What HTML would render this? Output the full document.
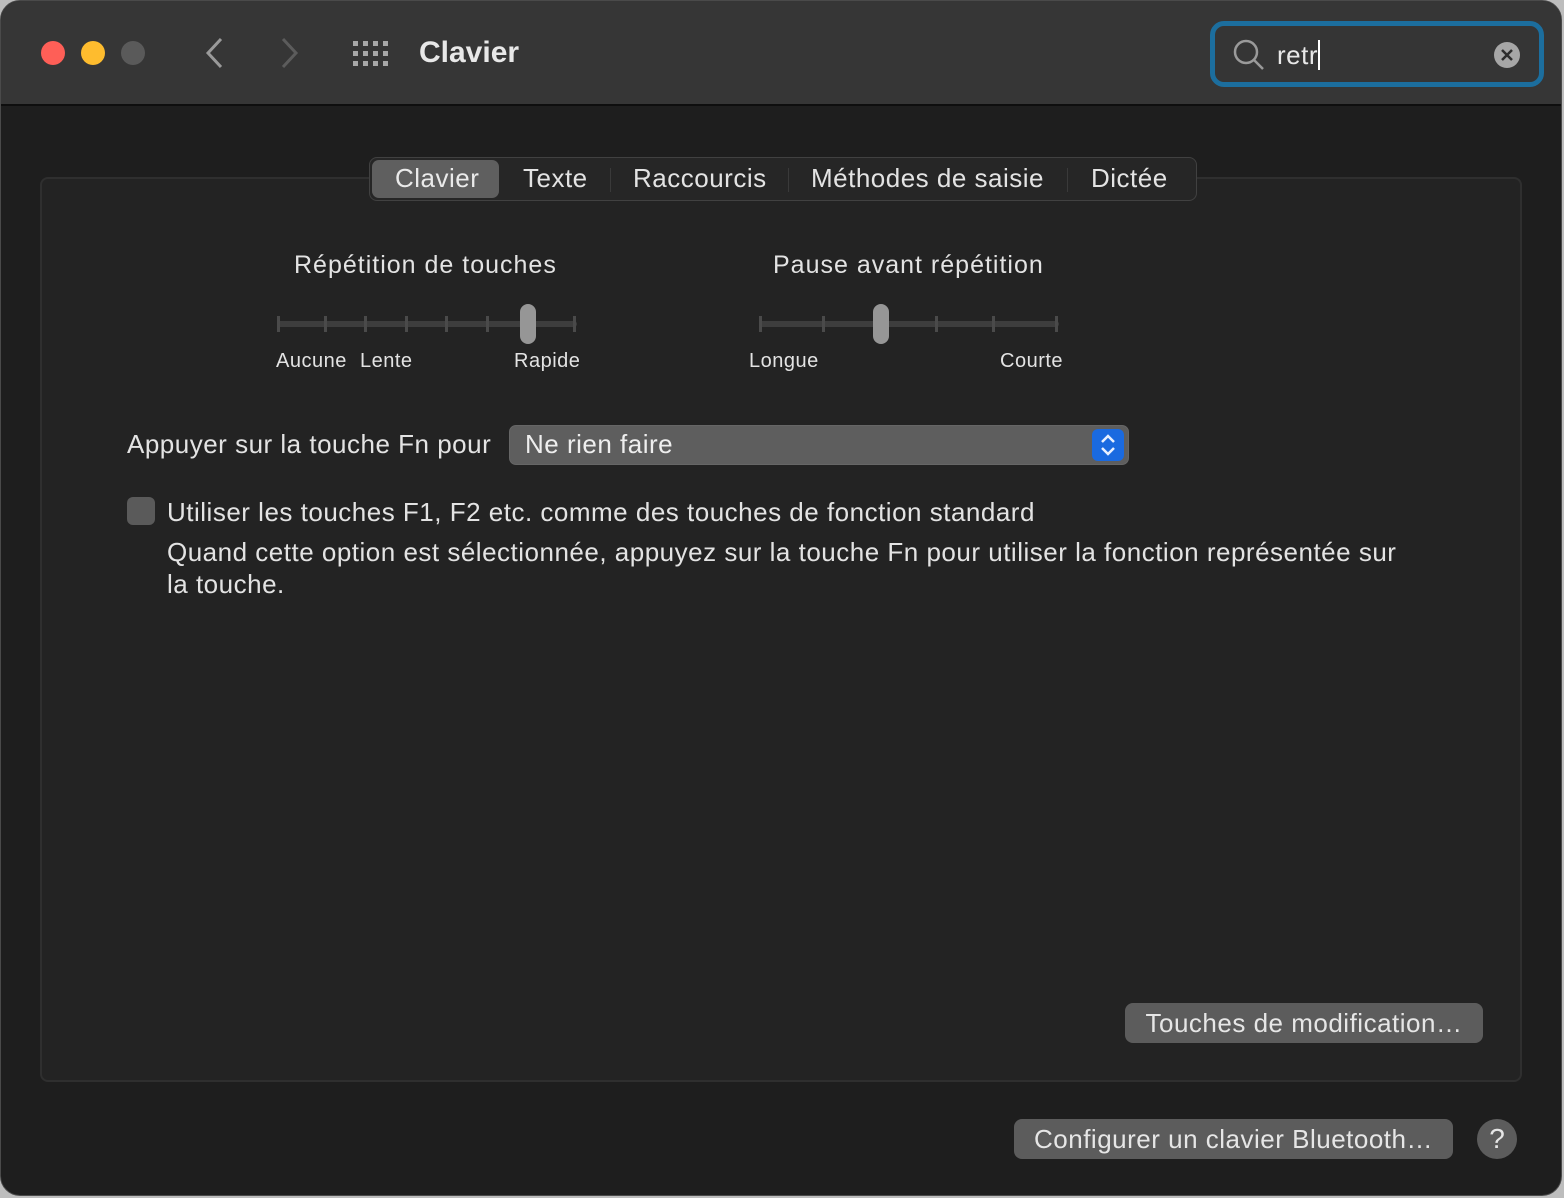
<!DOCTYPE html>
<html><head><meta charset="utf-8"><style>
*{margin:0;padding:0;box-sizing:border-box}
body{width:1564px;height:1198px;background:#bdbdbd;font-family:"Liberation Sans",sans-serif;color:#e3e3e3;overflow:hidden;position:relative;letter-spacing:0.5px}
.win{position:absolute;left:0;top:0;width:1562px;height:1196px;background:#1e1e1e;border-radius:20px;overflow:hidden;border:1px solid #4a4a4a}
.tb{position:absolute;left:0;top:0;width:100%;height:105px;background:#363636;border-bottom:2px solid #0e0e0e}
.dot{position:absolute;top:40px;width:24px;height:24px;border-radius:50%}
.abs{position:absolute;white-space:nowrap}
.panel{position:absolute;left:39px;top:176px;width:1482px;height:905px;border:2px solid #2f2f2f;border-radius:8px;background:#232323}
.tabs{position:absolute;left:368px;top:156px;width:828px;height:44px;border:1px solid #414141;border-radius:8px;background:#262626;font-size:26px}
.btn{position:absolute;background:#5c5c5c;border-radius:8px;font-size:26px;color:#e6e6e6;text-align:center}
.sl{position:absolute;height:6px;background:#3d3d3d;border-radius:3px}
.tick{position:absolute;width:3px;height:16px;background:#4a4a4a;top:-5px}
.knob{position:absolute;width:16px;height:40px;background:#969696;border-radius:8px;top:-17px}
</style></head><body>
<div class="win">
<div class="tb">
 <div class="dot" style="left:40px;background:#fe5f57"></div>
 <div class="dot" style="left:80px;background:#febc2e"></div>
 <div class="dot" style="left:120px;background:#5a5a5a"></div>
 <svg class="abs" style="left:200px;top:34px" width="110" height="36"><path d="M20 4 L7 18 L20 32" stroke="#9a9a9a" stroke-width="3" fill="none"/><path d="M82 4 L95 18 L82 32" stroke="#5c5c5c" stroke-width="3" fill="none"/></svg>
 <svg class="abs" style="left:352px;top:40px" width="36" height="28" fill="#a8a8a8">
  <rect x="0" y="0" width="5" height="5"/><rect x="10" y="0" width="5" height="5"/><rect x="20" y="0" width="5" height="5"/><rect x="30" y="0" width="5" height="5"/>
  <rect x="0" y="10" width="5" height="5"/><rect x="10" y="10" width="5" height="5"/><rect x="20" y="10" width="5" height="5"/><rect x="30" y="10" width="5" height="5"/>
  <rect x="0" y="20" width="5" height="5"/><rect x="10" y="20" width="5" height="5"/><rect x="20" y="20" width="5" height="5"/><rect x="30" y="20" width="5" height="5"/></svg>
 <div class="abs" style="left:418px;top:35px;font-size:30px;font-weight:bold;color:#e8e8e8;letter-spacing:0">Clavier</div>
 <div class="abs" style="left:1209px;top:20px;width:334px;height:66px;border:5px solid #1c6e9e;border-radius:14px;background:#353535"></div>
 <svg class="abs" style="left:1230px;top:36px" width="36" height="36"><circle cx="15" cy="15" r="11" stroke="#9a9a9a" stroke-width="2.5" fill="none"/><path d="M23 23 L32 32" stroke="#9a9a9a" stroke-width="2.5"/></svg>
 <div class="abs" style="left:1276px;top:39px;font-size:26px;color:#e8e8e8">retr<span style="display:inline-block;width:2px;height:30px;background:#fff;vertical-align:-6px"></span></div>
 <svg class="abs" style="left:1492px;top:40px" width="28" height="28"><circle cx="14" cy="14" r="13" fill="#a6a6a6"/><path d="M9 9 L19 19 M19 9 L9 19" stroke="#2e2e2e" stroke-width="2.5"/></svg>
</div>
<div class="panel"></div>
<div class="tabs">
 <div class="abs" style="left:2px;top:2px;width:127px;height:38px;background:#5f5f5f;border-radius:7px"></div>
 <div class="abs" style="left:25px;top:5px;color:#eaeaea">Clavier</div>
 <div class="abs" style="left:153px;top:5px">Texte</div>
 <div class="abs" style="left:263px;top:5px">Raccourcis</div>
 <div class="abs" style="left:441px;top:5px">Méthodes de saisie</div>
 <div class="abs" style="left:721px;top:5px">Dictée</div>
 <div class="abs" style="left:240px;top:10px;width:1px;height:24px;background:#3a3a3a"></div>
 <div class="abs" style="left:418px;top:10px;width:1px;height:24px;background:#3a3a3a"></div>
 <div class="abs" style="left:697px;top:10px;width:1px;height:24px;background:#3a3a3a"></div>
</div>
<div class="abs" style="left:293px;top:250px;font-size:25px;letter-spacing:1px">Répétition de touches</div>
<div class="abs" style="left:772px;top:250px;font-size:25px;letter-spacing:1px">Pause avant répétition</div>
<div class="sl" style="left:276px;top:320px;width:300px">
 <div class="tick" style="left:0"></div><div class="tick" style="left:47px"></div><div class="tick" style="left:87px"></div><div class="tick" style="left:128px"></div><div class="tick" style="left:168px"></div><div class="tick" style="left:209px"></div><div class="tick" style="left:296px"></div>
 <div class="knob" style="left:243px"></div>
</div>
<div class="sl" style="left:758px;top:320px;width:300px">
 <div class="tick" style="left:0"></div><div class="tick" style="left:63px"></div><div class="tick" style="left:176px"></div><div class="tick" style="left:233px"></div><div class="tick" style="left:296px"></div>
 <div class="knob" style="left:114px"></div>
</div>
<div class="abs" style="left:275px;top:349px;font-size:20px">Aucune</div>
<div class="abs" style="left:359px;top:349px;font-size:20px">Lente</div>
<div class="abs" style="left:513px;top:349px;font-size:20px">Rapide</div>
<div class="abs" style="left:748px;top:349px;font-size:20px">Longue</div>
<div class="abs" style="left:999px;top:349px;font-size:20px">Courte</div>
<div class="abs" style="left:126px;top:428px;font-size:26px">Appuyer sur la touche Fn pour</div>
<div class="abs" style="left:508px;top:424px;width:620px;height:40px;background:#5e5e5e;border-radius:7px;border:1px solid #666"></div>
<div class="abs" style="left:524px;top:428px;font-size:26px;color:#eee">Ne rien faire</div>
<svg class="abs" style="left:1091px;top:428px" width="32" height="32"><rect x="0" y="0" width="32" height="32" rx="6" fill="#1a6ae0"/><path d="M10 13 L16 7 L22 13 M10 19 L16 25 L22 19" stroke="#e8f0ff" stroke-width="2.5" fill="none"/></svg>
<div class="abs" style="left:126px;top:496px;width:28px;height:28px;background:#5a5a5a;border-radius:6px"></div>
<div class="abs" style="left:166px;top:496px;font-size:26px">Utiliser les touches F1, F2 etc. comme des touches de fonction standard</div>
<div class="abs" style="left:166px;top:535px;font-size:26px;line-height:32px;white-space:normal;width:1250px">Quand cette option est sélectionnée, appuyez sur la touche Fn pour utiliser la fonction représentée sur la touche.</div>
<div class="btn" style="left:1124px;top:1002px;width:358px;height:40px;line-height:40px">Touches de modification…</div>
<div class="btn" style="left:1013px;top:1118px;width:439px;height:40px;line-height:40px">Configurer un clavier Bluetooth…</div>
<div class="abs" style="left:1476px;top:1118px;width:40px;height:40px;border-radius:50%;background:#5c5c5c;font-size:28px;text-align:center;line-height:40px;color:#e6e6e6;letter-spacing:0">?</div>
</div>
</body></html>
